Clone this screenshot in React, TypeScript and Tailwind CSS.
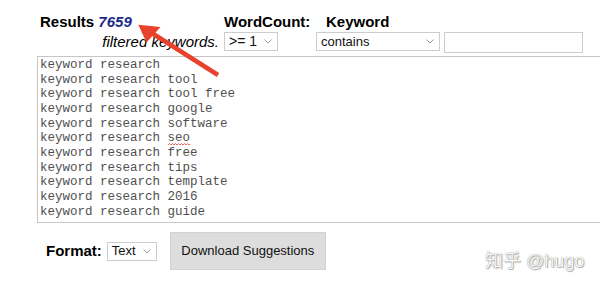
import React from "react";

const keywords = [
  "keyword research",
  "keyword research tool",
  "keyword research tool free",
  "keyword research google",
  "keyword research software",
  "keyword research seo",
  "keyword research free",
  "keyword research tips",
  "keyword research template",
  "keyword research 2016",
  "keyword research guide",
];

const Chevron = () => (
  <svg width="8" height="5" viewBox="0 0 8 5" className="shrink-0">
    <path d="M0.5 0.5 L4 4 L7.5 0.5" fill="none" stroke="#9a9a9a" strokeWidth="1" />
  </svg>
);

const FakeSelect = ({ label, className }: { label: string; className: string }) => (
  <div
    className={`flex items-center justify-between border border-[#cdcdcd] bg-white pl-[4px] pr-[5px] text-[#111] ${className}`}
  >
    <span>{label}</span>
    <Chevron />
  </div>
);

// spellcheck squiggle under a word
const Squiggle = ({ word }: { word: string }) => (
  <span className="relative">
    {word}
    <svg className="absolute left-0 top-[11.5px]" width="22" height="3" viewBox="0 0 22 3">
      <path
        d="M0 2 L1.5 0.5 L3 2 L4.5 0.5 L6 2 L7.5 0.5 L9 2 L10.5 0.5 L12 2 L13.5 0.5 L15 2 L16.5 0.5 L18 2 L19.5 0.5 L21 2 L22 1"
        fill="none"
        stroke="#e0463a"
        strokeWidth="0.8"
      />
    </svg>
  </span>
);

const Line = ({ text }: { text: string }) => {
  if (text.endsWith(" seo")) {
    return (
      <div>
        keyword research <Squiggle word="seo" />
      </div>
    );
  }
  return <div>{text}</div>;
};

const App = () => {
  return (
    <div className="relative w-[600px] h-[290px] overflow-hidden bg-white font-['Liberation_Sans',Arial,sans-serif] text-black">
      {/* filter header */}
      <div className="flex pt-[13px] pl-[40px]">
        <div className="flex flex-col w-[184px]">
          <div className="h-[19px] leading-[17px] text-[15px] font-bold">
            Results <span className="italic text-[#1c2a8a]">7659</span>
          </div>
          <div className="h-[20px] pt-[1px] pr-[5px] text-right leading-[17px] text-[15px] italic">
            filtered keywords.
          </div>
        </div>
        <div className="flex flex-col w-[92px]">
          <div className="h-[19px] leading-[17px] text-[15px] font-bold">WordCount:</div>
          <FakeSelect label=">= 1" className="w-[54px] h-[19px] text-[14px]" />
        </div>
        <div className="flex flex-col">
          <div className="h-[19px] pl-[10px] leading-[17px] text-[15px] font-bold">Keyword</div>
          <div className="flex items-start gap-[4px]">
            <FakeSelect label="contains" className="w-[124px] h-[19px] text-[13px]" />
            <div className="w-[139px] h-[21px] border border-[#cdcdcd] bg-white" />
          </div>
        </div>
      </div>

      {/* suggestions box */}
      <div className="mt-[3px] ml-[37px] w-[580px] h-[167px] border border-[#c6c6c6] px-[2px] pt-[1px] whitespace-pre font-['Liberation_Mono','Courier_New',monospace] text-[12.5px] leading-[14.67px] text-[#505050]">
        {keywords.map((k) => (
          <Line key={k} text={k} />
        ))}
      </div>

      {/* format row */}
      <div className="flex items-center mt-[9px] pl-[46px]">
        <span className="text-[15px] font-bold">Format:</span>
        <FakeSelect label="Text" className="ml-[5px] w-[50px] h-[19px] text-[13px]" />
        <button className="ml-[13px] w-[156px] h-[38px] border border-[#d2d2d2] bg-[#dddddd] text-[13px] text-[#111]">
          Download Suggestions
        </button>
      </div>

      {/* watermark */}
      <div className="absolute left-[485px] top-[248px] text-[18px] text-[#f6f6f6] font-['Liberation_Sans','Noto_Sans_CJK_SC',sans-serif] [text-shadow:0_0_1px_#8a8a8a,1px_1px_1px_#b0b0b0]">
        知乎 @hugo
      </div>

      {/* annotation arrow */}
      <svg className="absolute inset-0 pointer-events-none" width="600" height="290" viewBox="0 0 600 290">
        <line x1="218" y1="75" x2="151" y2="32.5" stroke="#e8412c" strokeWidth="4.5" />
        <polygon points="138.3,24.7 160.5,27 146.5,42.5" fill="#e8412c" />
      </svg>
    </div>
  );
};

export default App;
